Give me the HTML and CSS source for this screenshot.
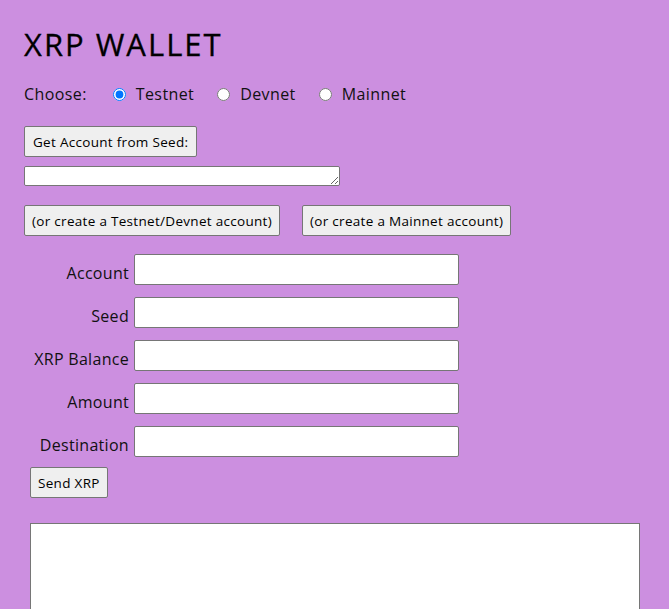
FILE: index.html
```html
<!DOCTYPE html>
<html>
<head>
<meta charset="utf-8">
<link rel="stylesheet" href="styles.css">
</head>
<body>
<div class="page">
  <h1 class="title">XRP WALLET</h1>
  <div class="choose">
    <span class="choose-label">Choose:</span>
    <label class="net"><input type="radio" name="net" checked> Testnet</label>
    <label class="net"><input type="radio" name="net"> Devnet</label>
    <label class="net"><input type="radio" name="net"> Mainnet</label>
  </div>
  <button class="btn btn-seed">Get Account from Seed:</button>
  <textarea class="seed-area"></textarea>
  <div class="create-row">
    <button class="btn">(or create a Testnet/Devnet account)</button>
    <button class="btn">(or create a Mainnet account)</button>
  </div>
  <div class="form">
    <label class="flabel">Account</label><input class="finput" type="text">
    <label class="flabel">Seed</label><input class="finput" type="text">
    <label class="flabel">XRP Balance</label><input class="finput" type="text">
    <label class="flabel">Amount</label><input class="finput" type="text">
    <label class="flabel">Destination</label><input class="finput" type="text">
  </div>
  <button class="btn btn-send">Send XRP</button>
  <textarea class="results"></textarea>
</div>
</body>
</html>
```
FILE: styles.css
```css
html, body {
  margin: 0;
  padding: 0;
  background: #cc8fe0;
}
body {
  font-family: "Open Sans", "Liberation Sans", sans-serif;
  color: #111;
  overflow: hidden;
  height: 609px;
}
.page {
  padding: 24px 0 0 24px;
  display: flex;
  flex-direction: column;
  align-items: flex-start;
}
.title {
  margin: 0;
  font-size: 31px;
  font-weight: 400;
  letter-spacing: 2px;
  line-height: 40px;
  color: #000;
  -webkit-text-stroke: 0.3px #000;
}
.choose {
  margin-top: 20px;
  display: flex;
  align-items: center;
  font-size: 16px;
  letter-spacing: 0.4px;
  line-height: 20px;
}
.choose-label {
  margin-right: 21px;
}
.net {
  display: flex;
  align-items: center;
  margin-right: 18px;
}
.net input {
  margin: 0 10px 0 5px;
  width: 13px;
  height: 13px;
}
.btn {
  font-family: "Open Sans", "Liberation Sans", sans-serif;
  font-size: 13.5px;
  letter-spacing: 0.3px;
  color: #000;
  background: #efefef;
  border: 1px solid #767676;
  border-radius: 2px;
  height: 31px;
  padding: 0 7px;
}
.btn-seed {
  margin-top: 22px;
  padding: 0 8px;
}
.seed-area {
  margin-top: 9px;
  width: 310px;
  height: 14px;
  padding: 2px;
  border: 1px solid #767676;
  border-radius: 2px;
  resize: both;
}
.create-row {
  margin-top: 19px;
  display: flex;
  gap: 22px;
}
.form {
  margin-top: 18px;
  display: grid;
  grid-template-columns: 105px 325px;
  column-gap: 5px;
  row-gap: 12px;
  align-items: center;
}
.flabel {
  text-align: right;
  font-size: 16px;
  letter-spacing: 0.3px;
  padding-top: 6px;
}
.finput {
  box-sizing: border-box;
  width: 325px;
  height: 31px;
  border: 1px solid #767676;
  border-radius: 2px;
  margin: 0;
}
.btn-send {
  margin: 10px 0 0 6px;
}
.results {
  margin: 25px 0 0 6px;
  width: 608px;
  height: 120px;
  border: 1px solid #767676;
  border-radius: 0;
  padding: 0;
}
```
